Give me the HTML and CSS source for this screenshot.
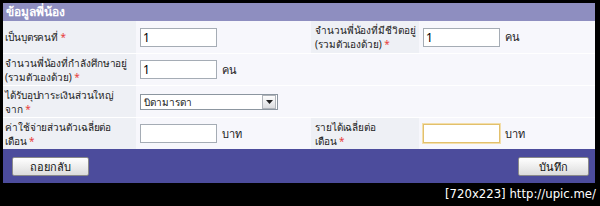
FILE: index.html
```html
<!DOCTYPE html>
<html lang="th">
	<head>
		<meta charset="utf-8"/>
		<title>ข้อมูลพี่น้อง</title>
		<link rel="stylesheet" href="styles.css">
	</head>
	<body>
		<div class="panel">
			<div class="panel-head">ข้อมูลพี่น้อง</div>
			<table class="form">
				<colgroup>
					<col class="c-lbl">
					<col class="c-val">
					<col class="c-lbl2">
					<col>
				</colgroup>
				<tr>
					<td class="lbl">เป็นบุตรคนที่ <span class="req">*</span></td>
					<td class="val"><input type="text" class="txt" value="1"></td>
					<td class="lbl lbl2">จำนวนพี่น้องที่มีชีวิตอยู่<br>(รวมตัวเองด้วย) <span class="req">*</span></td>
					<td class="val"><input type="text" class="txt" value="1"> <span class="unit">คน</span></td>
				</tr>
				<tr>
					<td class="lbl">จำนวนพี่น้องที่กำลังศึกษาอยู่<br>(รวมตัวเองด้วย) <span class="req">*</span></td>
					<td class="val" colspan="3"><input type="text" class="txt" value="1"> <span class="unit">คน</span></td>
				</tr>
				<tr>
					<td class="lbl">ได้รับอุปการะเงินส่วนใหญ่<br>จาก <span class="req">*</span></td>
					<td class="val" colspan="3">
						<div class="select"><span>บิดามารดา</span><span class="arrow"><svg width="7" height="4" viewBox="0 0 7 4"><path d="M0 0h7L3.5 4z" fill="#222"/></svg></span></div>
					</td>
				</tr>
				<tr>
					<td class="lbl">ค่าใช้จ่ายส่วนตัวเฉลี่ยต่อ<br>เดือน <span class="req">*</span></td>
					<td class="val"><input type="text" class="txt"> <span class="unit">บาท</span></td>
					<td class="lbl lbl2">รายได้เฉลี่ยต่อ<br>เดือน <span class="req">*</span></td>
					<td class="val"><input type="text" class="txt focus"> <span class="unit">บาท</span></td>
				</tr>
			</table>
			<div class="panel-foot">
				<button class="btn">ถอยกลับ</button>
				<button class="btn">บันทึก</button>
			</div>
		</div>
		<div class="credit">[720x223] http://upic.me/</div>
	</body>
</html>
```

FILE: styles.css
```css
html, body {
	margin: 0;
	padding: 0;
	background-color: #000000;
	font-family: Tahoma, "Noto Sans", "DejaVu Sans", sans-serif;
	font-size: 10px;
}
.panel {
	margin: 3px 5px 0 3px;
	background-color: #ffffff;
}
.panel-head {
	background-color: #8e8ec0;
	color: #ffffff;
	font-weight: bold;
	font-size: 12px;
	height: 18px;
	line-height: 18px;
	padding-left: 3px;
}
.form {
	width: 100%;
	border-collapse: collapse;
	table-layout: fixed;
}
.c-lbl {
	width: 133px;
}
.c-val {
	width: 175px;
}
.c-lbl2 {
	width: 108px;
}
.form td {
	border-top: 1px solid #ffffff;
	vertical-align: middle;
	padding: 0;
	color: #222222;
	line-height: 14px;
	height: 31px;
	white-space: nowrap;
}
.form tr:first-child td {
	border-top: none;
	height: 32px;
}
.lbl {
	background-color: #eef0f5;
	padding-left: 2px !important;
	overflow: hidden;
	letter-spacing: -0.1px;
}
.lbl2 {
	padding-left: 4px !important;
}
.val {
	background-color: #f7f7fc;
	padding-left: 4px !important;
}
.req {
	color: #e8403c;
}
.txt {
	width: 71px;
	height: 15px;
	border: 1px solid #a5acb5;
	padding: 1px 2px;
	font-family: inherit;
	font-size: 12px;
	vertical-align: middle;
	margin: 0;
}
.focus {
	border-color: #e2c06c;
	box-shadow: 0 0 0 1px #f3deaa;
}
.unit {
	margin-left: 2px;
	vertical-align: middle;
	font-size: 11px;
}
.select {
	display: flex;
	align-items: center;
	justify-content: space-between;
	width: 133px;
	height: 14px;
	border: 1px solid #8c96a0;
	background-color: #ffffff;
	padding-left: 3px;
}
.arrow {
	display: flex;
	align-items: center;
	justify-content: center;
	width: 12px;
	height: 12px;
	margin-right: 1px;
	border: 1px solid #b0b4ba;
	background: linear-gradient(#fdfdfd, #dcdde0);
}
.panel-foot {
	background-color: #4c4c9c;
	display: flex;
	justify-content: space-between;
	align-items: center;
	height: 34px;
	padding: 0 6px 0 9px;
}
.btn {
	font-family: inherit;
	font-size: 11px;
	height: 19px;
	padding: 0;
	width: 77px;
	border: 1px solid #8a8a8a;
	border-radius: 2px;
	background: linear-gradient(#ffffff, #dcdcdc);
	color: #111111;
	margin-top: 1px;
}
.btn:last-child {
	width: 71px;
}
.credit {
	color: #ffffff;
	text-align: right;
	font-family: "DejaVu Sans Condensed", "DejaVu Sans", sans-serif;
	font-stretch: condensed;
	font-size: 13px;
	line-height: 16px;
	padding: 3px 4px 0 0;
}
```
